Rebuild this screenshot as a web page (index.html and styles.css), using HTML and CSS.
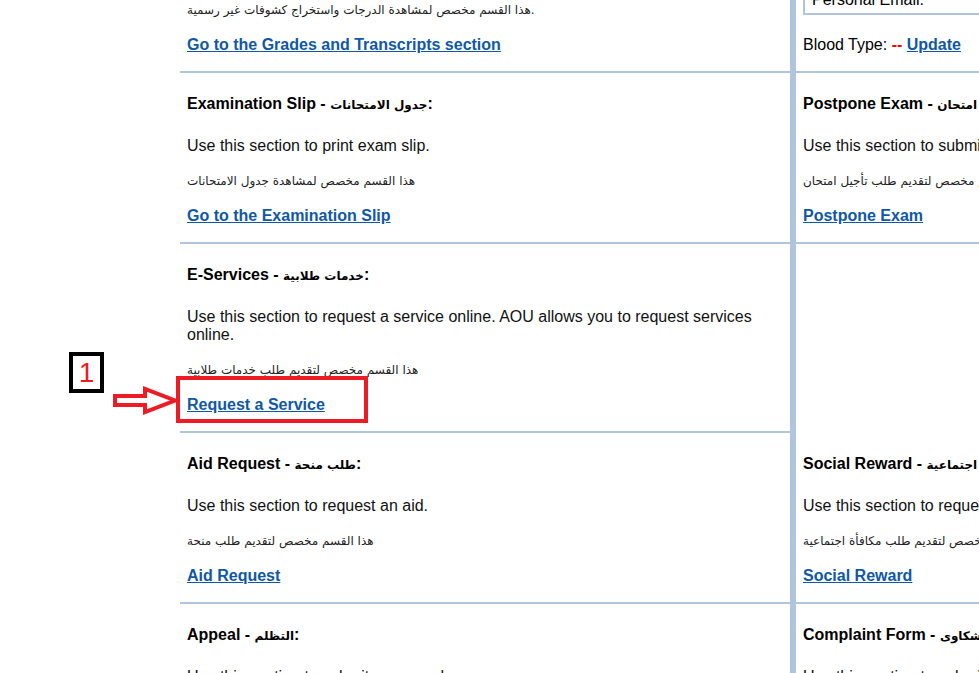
FILE: index.html
```html
<!DOCTYPE html>
<html lang="en">
<head>
    <meta charset="UTF-8">
    <meta name="viewport" content="width=device-width, initial-scale=1.0">
    <title>Student Services</title>
    <link rel="stylesheet" href="styles.css">
</head>
<body>
    <div class="page">
        <div class="sections">
            <!-- row 1 -->
            <div class="cell left">
                <h4 class="title">Grades and Transcripts - <span class="ar">الدرجات والكشوفات</span>:</h4>
                <p class="desc">Use this section to view your grades and print unofficial transcripts.</p>
                <p class="note ar">هذا القسم مخصص لمشاهدة الدرجات واستخراج كشوفات غير رسمية.</p>
                <p class="go"><a href="#">Go to the Grades and Transcripts section</a></p>
            </div>
            <div class="cell right profile">
                <table class="info">
                    <tr><td class="label">Name:</td><td class="value">name</td></tr>
                    <tr><td class="label">Student ID:</td><td class="value">name</td></tr>
                    <tr><td class="label">Personal Email:</td><td class="value">name@aou.edu</td></tr>
                </table>
                <p class="blood">Blood Type: <span class="dash">--</span> <a href="#">Update</a></p>
            </div>

            <!-- row 2 -->
            <div class="cell left">
                <h4 class="title">Examination Slip - <span class="ar">جدول الامتحانات</span>:</h4>
                <p class="desc">Use this section to print exam slip.</p>
                <p class="note ar">هذا القسم مخصص لمشاهدة جدول الامتحانات</p>
                <p class="go"><a href="#">Go to the Examination Slip</a></p>
            </div>
            <div class="cell right">
                <h4 class="title">Postpone Exam - <span class="ar">طلب تأجيل امتحان</span>:</h4>
                <p class="desc">Use this section to submit a request to postpone an exam.</p>
                <p class="note ar">هذا القسم مخصص لتقديم طلب تأجيل امتحان</p>
                <p class="go"><a href="#">Postpone Exam</a></p>
            </div>

            <!-- row 3 -->
            <div class="cell left">
                <h4 class="title">E-Services - <span class="ar">خدمات طلابية</span>:</h4>
                <p class="desc">Use this section to request a service online. AOU allows you to request services online.</p>
                <p class="note ar">هذا القسم مخصص لتقديم طلب خدمات طلابية</p>
                <p class="go"><a href="#">Request a Service</a></p>
            </div>
            <div class="cell right blank"></div>

            <!-- row 4 -->
            <div class="cell left">
                <h4 class="title">Aid Request - <span class="ar">طلب منحة</span>:</h4>
                <p class="desc">Use this section to request an aid.</p>
                <p class="note ar">هذا القسم مخصص لتقديم طلب منحة</p>
                <p class="go"><a href="#">Aid Request</a></p>
            </div>
            <div class="cell right">
                <h4 class="title">Social Reward - <span class="ar">مكافأة اجتماعية</span>:</h4>
                <p class="desc">Use this section to request a social reward.</p>
                <p class="note ar">هذا القسم مخصص لتقديم طلب مكافأة اجتماعية</p>
                <p class="go"><a href="#">Social Reward</a></p>
            </div>

            <!-- row 5 -->
            <div class="cell left">
                <h4 class="title">Appeal - <span class="ar">التظلم</span>:</h4>
                <p class="desc">Use this section to submit an appeal.</p>
                <p class="note ar">هذا القسم مخصص لتقديم التظلم</p>
                <p class="go"><a href="#">Appeal</a></p>
            </div>
            <div class="cell right">
                <h4 class="title">Complaint Form - <span class="ar">نموذج الشكاوى</span>:</h4>
                <p class="desc">Use this section to submit a complaint.</p>
                <p class="note ar">هذا القسم مخصص لتقديم الشكاوى</p>
                <p class="go"><a href="#">Complaint Form</a></p>
            </div>
        </div>

        <!-- annotation marks -->
        <div class="step">1</div>
        <svg class="arrow" width="72" height="32" viewBox="0 0 72 32">
            <polygon points="5,11 35,11 35,4 65,15.5 35,27 35,20 5,20" fill="none" stroke="#ed1c24" stroke-width="4"/>
        </svg>
        <div class="mark"></div>
    </div>
</body>
</html>
```

FILE: styles.css
```css
body {
    margin: 0;
    padding: 0;
    background-color: #fff;
    font-family: "Liberation Sans", Arial, sans-serif;
    font-size: 16px;
    color: #111;
    overflow: hidden;
}

.page {
    position: relative;
    height: 673px;
    overflow: hidden;
}

.sections {
    display: grid;
    grid-template-columns: 616px 620px;
    width: 1236px;
    margin: -98px 0 0 180px;
}

.cell {
    box-sizing: border-box;
    padding: 22px 7px 17px;
    border-bottom: 2px solid #b0c4de;
}

.cell.left {
    border-right: 6px solid #b0c4de;
}

.cell.blank {
    border-bottom-color: transparent;
}

.title {
    margin: 0;
    font-size: 16px;
    line-height: 18px;
    font-weight: bold;
    color: #000;
}

.desc {
    margin: 23px 0 0;
    line-height: 18px;
}

.note {
    margin: 17px 0 0;
    line-height: 18px;
}

.go {
    margin: 17px 0 0;
    line-height: 18px;
    font-weight: bold;
}

.ar {
    font-family: "DejaVu Sans", sans-serif;
    font-size: 12px;
    color: #222;
}

.title .ar {
    color: #000;
}

a {
    color: #0f58a6;
    text-decoration: underline;
}

.profile {
    display: flex;
    flex-direction: column;
    justify-content: flex-end;
}

.info {
    border-collapse: collapse;
    border: 2px solid #b0c4de;
}

.info td {
    padding: 4px 7px;
    line-height: 18px;
    border: 2px solid #b0c4de;
}

.info .label {
    width: 111px;
    color: #000;
}

.info .value {
    width: 200px;
    color: #f00;
}

.blood {
    margin: 21px 0 0;
    line-height: 18px;
    color: #000;
}

.blood .dash {
    color: #f00;
    font-weight: bold;
}

.blood a {
    font-weight: bold;
}

/* screenshot annotations */
.step {
    position: absolute;
    left: 69px;
    top: 352px;
    width: 35px;
    height: 41px;
    box-sizing: border-box;
    border: 4px solid #000;
    background: #fff;
    color: #ed1c24;
    font-size: 28px;
    line-height: 33px;
    text-align: center;
}

.arrow {
    position: absolute;
    left: 110px;
    top: 385px;
}

.mark {
    position: absolute;
    left: 176px;
    top: 376px;
    width: 192px;
    height: 47px;
    box-sizing: border-box;
    border: 4px solid #ed1c24;
}
```
